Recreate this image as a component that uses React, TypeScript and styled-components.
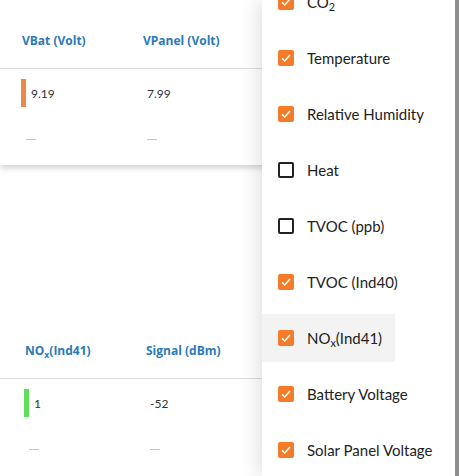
import React from "react";
import styled, { createGlobalStyle } from "styled-components";

const GlobalStyle = createGlobalStyle`
    html, body {
        margin: 0;
        padding: 0;
        background: #ffffff;
        font-family: Lato, "Open Sans", sans-serif;
    }
    #root {
        width: 459px;
        height: 476px;
        overflow: hidden;
        position: relative;
    }
`;

const Page = styled.div`
    display: flex;
    flex-direction: column;
    width: 459px;
    height: 476px;
    overflow: hidden;
`;

const Card = styled.div<{ $top: number; $shadow?: boolean }>`
    margin-top: ${p => p.$top}px;
    width: 459px;
    background: #ffffff;
    box-shadow: ${p => (p.$shadow ? "0 3px 6px rgba(0,0,0,0.18)" : "none")};
    flex-shrink: 0;
`;

const HeadRow = styled.div<{ $shift: number }>`
    display: flex;
    align-items: center;
    height: 56px;
    padding-top: 12px;
    padding-left: ${p => 21 + p.$shift}px;
    border-bottom: 1px solid #dddddd;
`;

const HeadCell = styled.div<{ $w: number; $indent: number }>`
    width: ${p => p.$w}px;
    padding-left: ${p => p.$indent}px;
    box-sizing: border-box;
    color: #2a7ab9;
    font-family: "Open Sans", Lato, sans-serif;
    font-weight: 700;
    font-size: 12px;
`;

const Row = styled.div<{ $h: number; $shift: number }>`
    display: flex;
    align-items: center;
    height: ${p => p.$h}px;
    padding-left: ${p => 21 + p.$shift}px;
`;

const Cell = styled.div<{ $w: number; $indent: number }>`
    display: flex;
    align-items: center;
    gap: 5px;
    width: ${p => p.$w}px;
    padding-left: ${p => p.$indent}px;
    box-sizing: border-box;
    color: #333333;
    font-size: 12px;
`;

const Bar = styled.span<{ $color: string }>`
    display: inline-block;
    width: 5px;
    height: 28px;
    background: ${p => p.$color};
`;

const Dash = styled.span`
    display: inline-block;
    width: 10px;
    height: 1px;
    background: #c4c4c4;
`;

const Panel = styled.div`
    position: absolute;
    top: 0;
    left: 262px;
    width: 197px;
    height: 476px;
    background: #ffffff;
    box-shadow: -4px 0 18px rgba(0,0,0,0.12);
    overflow: hidden;
`;

const List = styled.div`
    display: flex;
    flex-direction: column;
    align-items: flex-start;
    gap: 8px;
    margin-top: -22px;
`;

const Item = styled.div<{ $hover?: boolean }>`
    display: inline-flex;
    align-items: center;
    gap: 13px;
    height: 48px;
    padding: 0 13px 0 16px;
    box-sizing: border-box;
    background: ${p => (p.$hover ? "#f3f3f3" : "transparent")};
    color: #222222;
    font-size: 15px;
    white-space: nowrap;
`;

const Box = styled.span<{ $on: boolean }>`
    display: inline-flex;
    align-items: center;
    justify-content: center;
    width: 16px;
    height: 16px;
    box-sizing: border-box;
    border-radius: 2px;
    background: ${p => (p.$on ? "#f47b2a" : "#ffffff")};
    border: ${p => (p.$on ? "none" : "2px solid #222222")};
    flex-shrink: 0;
`;

const Sub = styled.sub`
    font-size: 0.72em;
    vertical-align: -3px;
    line-height: 0;
`;

const Thumb = styled.div`
    position: absolute;
    top: 0;
    right: 0;
    width: 4px;
    height: 476px;
    background: #8e8e8e;
`;

const Check = () => (
    <svg width="10" height="8" viewBox="0 0 10 8">
        <path d="M1 4.2 L3.8 7 L9 1" fill="none" stroke="#ffffff" strokeWidth="1.4" />
    </svg>
);

type Col = { head: React.ReactNode; value: string; bar?: string };

const Table = ({ cols, shift, top, shadow }: { cols: Col[]; shift: number; top: number; shadow?: boolean }) => (
    <Card $top={top} $shadow={shadow}>
        <HeadRow $shift={shift}>
            <HeadCell $w={122} $indent={1}>{cols[0].head}</HeadCell>
            <HeadCell $w={200} $indent={0}>{cols[1].head}</HeadCell>
        </HeadRow>
        <Row $h={48} $shift={shift}>
            <Cell $w={122} $indent={0}>
                <Bar $color={cols[0].bar || "#ccc"} />
                {cols[0].value}
            </Cell>
            <Cell $w={200} $indent={4}>{cols[1].value}</Cell>
        </Row>
        <Row $h={44} $shift={shift}>
            <Cell $w={122} $indent={5}><Dash /></Cell>
            <Cell $w={200} $indent={4}><Dash /></Cell>
        </Row>
        <div style={{ height: 4 }} />
    </Card>
);

const items: { label: React.ReactNode; on: boolean; hover?: boolean }[] = [
    { label: <>CO<Sub>2</Sub></>, on: true },
    { label: "Temperature", on: true },
    { label: "Relative Humidity", on: true },
    { label: "Heat", on: false },
    { label: "TVOC (ppb)", on: false },
    { label: "TVOC (Ind40)", on: true },
    { label: <>NO<Sub>x</Sub>(Ind41)</>, on: true, hover: true },
    { label: "Battery Voltage", on: true },
    { label: "Solar Panel Voltage", on: true },
];

const App: React.FC = () => {
    return (
        <>
            <GlobalStyle />
            <Page>
                <Table
                    top={0}
                    shift={0}
                    shadow
                    cols={[
                        { head: "VBat (Volt)", value: "9.19", bar: "#e8894a" },
                        { head: "VPanel (Volt)", value: "7.99" },
                    ]}
                />
                <Table
                    top={145}
                    shift={3}
                    cols={[
                        { head: <>NO<Sub>x</Sub>(Ind41)</>, value: "1", bar: "#5fe05a" },
                        { head: "Signal (dBm)", value: "-52" },
                    ]}
                />
            </Page>
            {/* dropdown of columns */}
            <Panel>
                <List>
                    {items.map((it, i) => (
                        <Item key={i} $hover={it.hover}>
                            <Box $on={it.on}>{it.on && <Check />}</Box>
                            <span>{it.label}</span>
                        </Item>
                    ))}
                </List>
                <Thumb />
            </Panel>
        </>
    );
};

export default App;
